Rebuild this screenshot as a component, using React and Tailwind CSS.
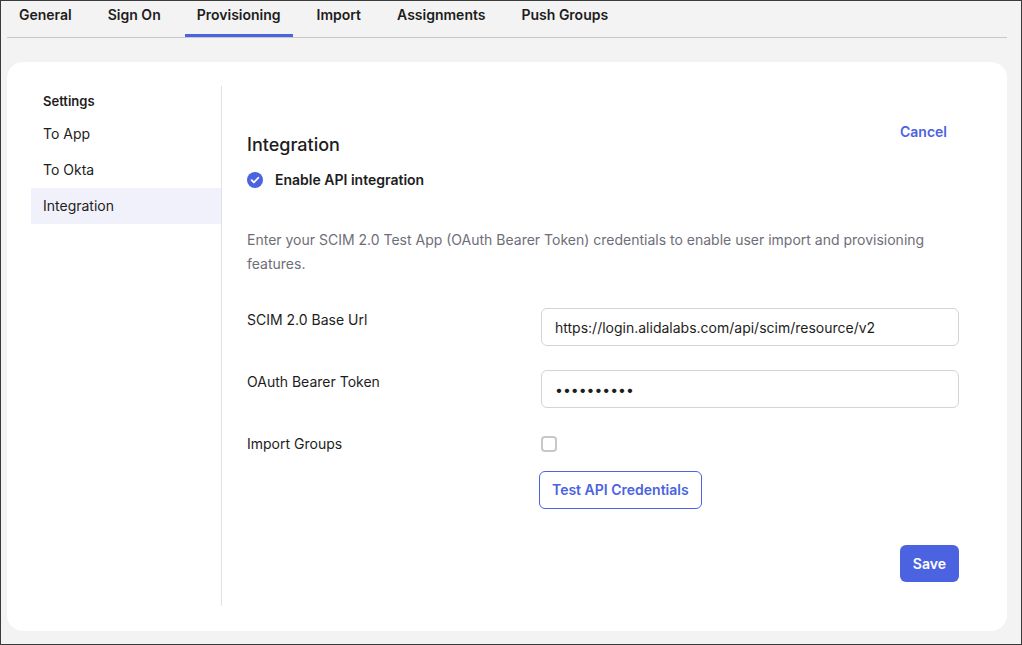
import React from 'react';

const tabs = ['General', 'Sign On', 'Provisioning', 'Import', 'Assignments', 'Push Groups'];
const sideItems = ['To App', 'To Okta', 'Integration'];

const Field = ({ label, children }) => (
    <div className="grid grid-cols-[294px_1fr]">
        <div className="pt-[2px] text-sm leading-5 text-[#1d1d21]">{label}</div>
        <div>{children}</div>
    </div>
);

const App = () => {
    return (
        <div className="flex h-screen w-full flex-col border border-[#3a3a3a] bg-[#f3f3f3] font-['Inter',sans-serif] text-[#1d1d21]">
            {/* tab strip */}
            <div className="ml-[6px] mr-[14px] flex gap-3 border-b border-[#c8c8c8]">
                {tabs.map((tab) => (
                    <div
                        key={tab}
                        className={`h-9 px-3 pt-1 text-sm leading-5 font-semibold ${tab === 'Provisioning' ? 'border-b-[3px] border-[#4b63e0]' : ''}`}
                    >
                        {tab}
                    </div>
                ))}
            </div>

            <div className="ml-[6px] mr-[14px] mt-6 mb-[13px] flex flex-1 rounded-2xl bg-white p-6 pb-[25px]">
                {/* settings nav */}
                <div className="w-[191px] shrink-0 border-r border-[#e1e1e3]">
                    <div className="flex h-[30px] items-center px-3 pt-[2px] text-[13px] font-semibold">Settings</div>
                    {sideItems.map((item) => (
                        <div
                            key={item}
                            className={`flex h-9 items-center px-3 text-sm ${item === 'Integration' ? 'bg-[#f1f1fb]' : ''}`}
                        >
                            {item}
                        </div>
                    ))}
                </div>

                {/* main */}
                <div className="flex flex-1 flex-col pt-7 pl-[25px] pr-6">
                    <div className="flex items-start justify-between">
                        <h2 className="mt-[17px] text-lg leading-7 font-medium">Integration</h2>
                        <button className="px-3 py-2 text-sm leading-5 font-semibold text-[#4b63e0]">Cancel</button>
                    </div>

                    <label className="mt-[11px] flex items-center gap-3 text-sm leading-5 font-semibold">
                        <span className="flex h-4 w-4 items-center justify-center rounded-full bg-[#4b63e0]">
                            <svg viewBox="0 0 16 16" className="h-3 w-3" fill="none" stroke="white" strokeWidth="2.4" strokeLinecap="round" strokeLinejoin="round">
                                <path d="M3.5 8.3l3 3 6-6.3" />
                            </svg>
                        </span>
                        Enable API integration
                    </label>

                    <p className="mt-[38px] max-w-[680px] text-sm leading-6 text-[#6e6e78]">
                        Enter your SCIM 2.0 Test App (OAuth Bearer Token) credentials to enable user import and provisioning features.
                    </p>

                    <div className="mt-8 flex flex-col gap-6">
                        <Field label="SCIM 2.0 Base Url">
                            <input
                                type="text"
                                readOnly
                                value="https://login.alidalabs.com/api/scim/resource/v2"
                                className="h-[38px] w-full rounded-md border border-[#d4d4d8] px-[13px] text-sm text-[#1d1d21] outline-none"
                            />
                        </Field>
                        <Field label="OAuth Bearer Token">
                            <input
                                type="password"
                                readOnly
                                value="abcdefghij"
                                className="h-[38px] w-full rounded-md border border-[#d4d4d8] px-[13px] text-sm text-[#1d1d21] outline-none"
                            />
                        </Field>
                        <Field label="Import Groups">
                            <span className="mt-1 block h-4 w-4 rounded-[4px] border-2 border-[#c8c8cc]" />
                        </Field>
                    </div>

                    <div className="mt-[17px] grid grid-cols-[292px_1fr]">
                        <div />
                        <div>
                            <button className="h-[38px] rounded-md border border-[#4b63e0] px-3 text-sm font-semibold text-[#4b63e0]">
                                Test API Credentials
                            </button>
                        </div>
                    </div>

                    <div className="mt-[36px] flex justify-end">
                        <button className="h-[37px] rounded-md bg-[#4b63e0] px-[13px] text-sm font-semibold text-white">Save</button>
                    </div>
                </div>
            </div>
        </div>
    );
};

export default App;
